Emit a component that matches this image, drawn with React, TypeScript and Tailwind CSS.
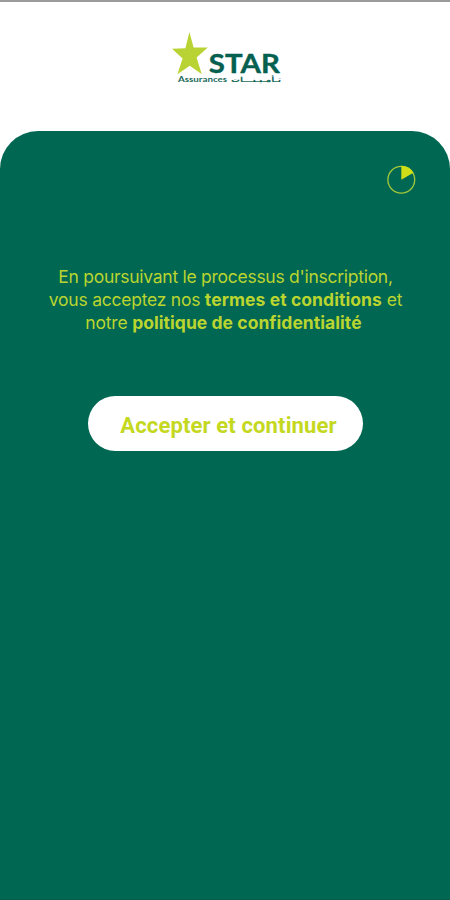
function Logo() {
  return (
    <svg width="114" height="58" viewBox="169 30 114 58" role="img" aria-label="STAR Assurances">
      <polygon
        points="189.4,32 193.6,47.4 207.8,47.6 196.6,57.4 201.8,74.2 189.8,65.8 177.4,74.2 182.6,58.6 172,48.8 185.4,48.2"
        fill="#b9d334"
      />
      <text x="208.8" y="72.6" textLength="71" lengthAdjust="spacingAndGlyphs" fontSize="26" className="font-['Lato','Open_Sans',sans-serif] font-bold" fill="#05604f" stroke="#05604f" strokeWidth="0.4">
        STAR
      </text>
      <text x="178" y="82.4" textLength="49" lengthAdjust="spacingAndGlyphs" fontSize="7.4" className="font-['Lato','Open_Sans',sans-serif] font-bold" fill="#1b6b5b">
        Assurances
      </text>
      <text x="231" y="82.2" direction="ltr" textLength="50" lengthAdjust="spacingAndGlyphs" fontSize="7" className="font-['DejaVu_Sans',sans-serif] font-bold" fill="#1b6b5b">
        تـأمـيـنـــات
      </text>
    </svg>
  );
}

function ProgressPie() {
  return (
    <svg width="30" height="30" viewBox="0 0 30 30" aria-hidden="true">
      <circle cx="15.3" cy="14.8" r="13.4" fill="none" stroke="#a3c83b" strokeWidth="1.3" />
      <path d="M15.3 14.8V0.8A14 14 0 0 1 27.4 7.8Z" fill="#d0de18" />
    </svg>
  );
}

export default function App() {
  return (
    <main className="flex h-[900px] w-[450px] flex-col overflow-hidden border-t-2 border-[#9b9b9b] bg-white">
      <header className="flex h-[129px] shrink-0 justify-center pt-7 pl-0.5">
        <Logo />
      </header>
      <section className="flex flex-1 flex-col items-center rounded-t-[38px] border-b border-[#075c4c] bg-[#006752]">
        <div className="flex w-full justify-end pt-[34px] pr-[34px]">
          <ProgressPie />
        </div>
        <p className="mt-[70px] flex flex-col items-center pl-px font-['Inter',sans-serif] text-[17.5px] leading-[23px] whitespace-nowrap text-[#bad52f]">
          <span className="tracking-[-0.27px]">En poursuivant le processus d'inscription,</span>
          <span className="tracking-[-0.24px]">
            vous acceptez nos <b className="font-bold tracking-[0.08px]">termes et conditions</b> et
          </span>
          <span className="mr-1 tracking-[-0.2px]">
            notre <b className="font-bold tracking-[0.05px]">politique de confidentialité</b>
          </span>
        </p>
        <button className="mt-[62px] flex h-[55px] w-[275px] items-center justify-center rounded-full bg-white pt-1 pl-[7px] font-['Roboto',sans-serif] text-[22px] font-bold tracking-[0.13px] whitespace-nowrap text-[#c4d81f]">
          Accepter et continuer
        </button>
      </section>
    </main>
  );
}
